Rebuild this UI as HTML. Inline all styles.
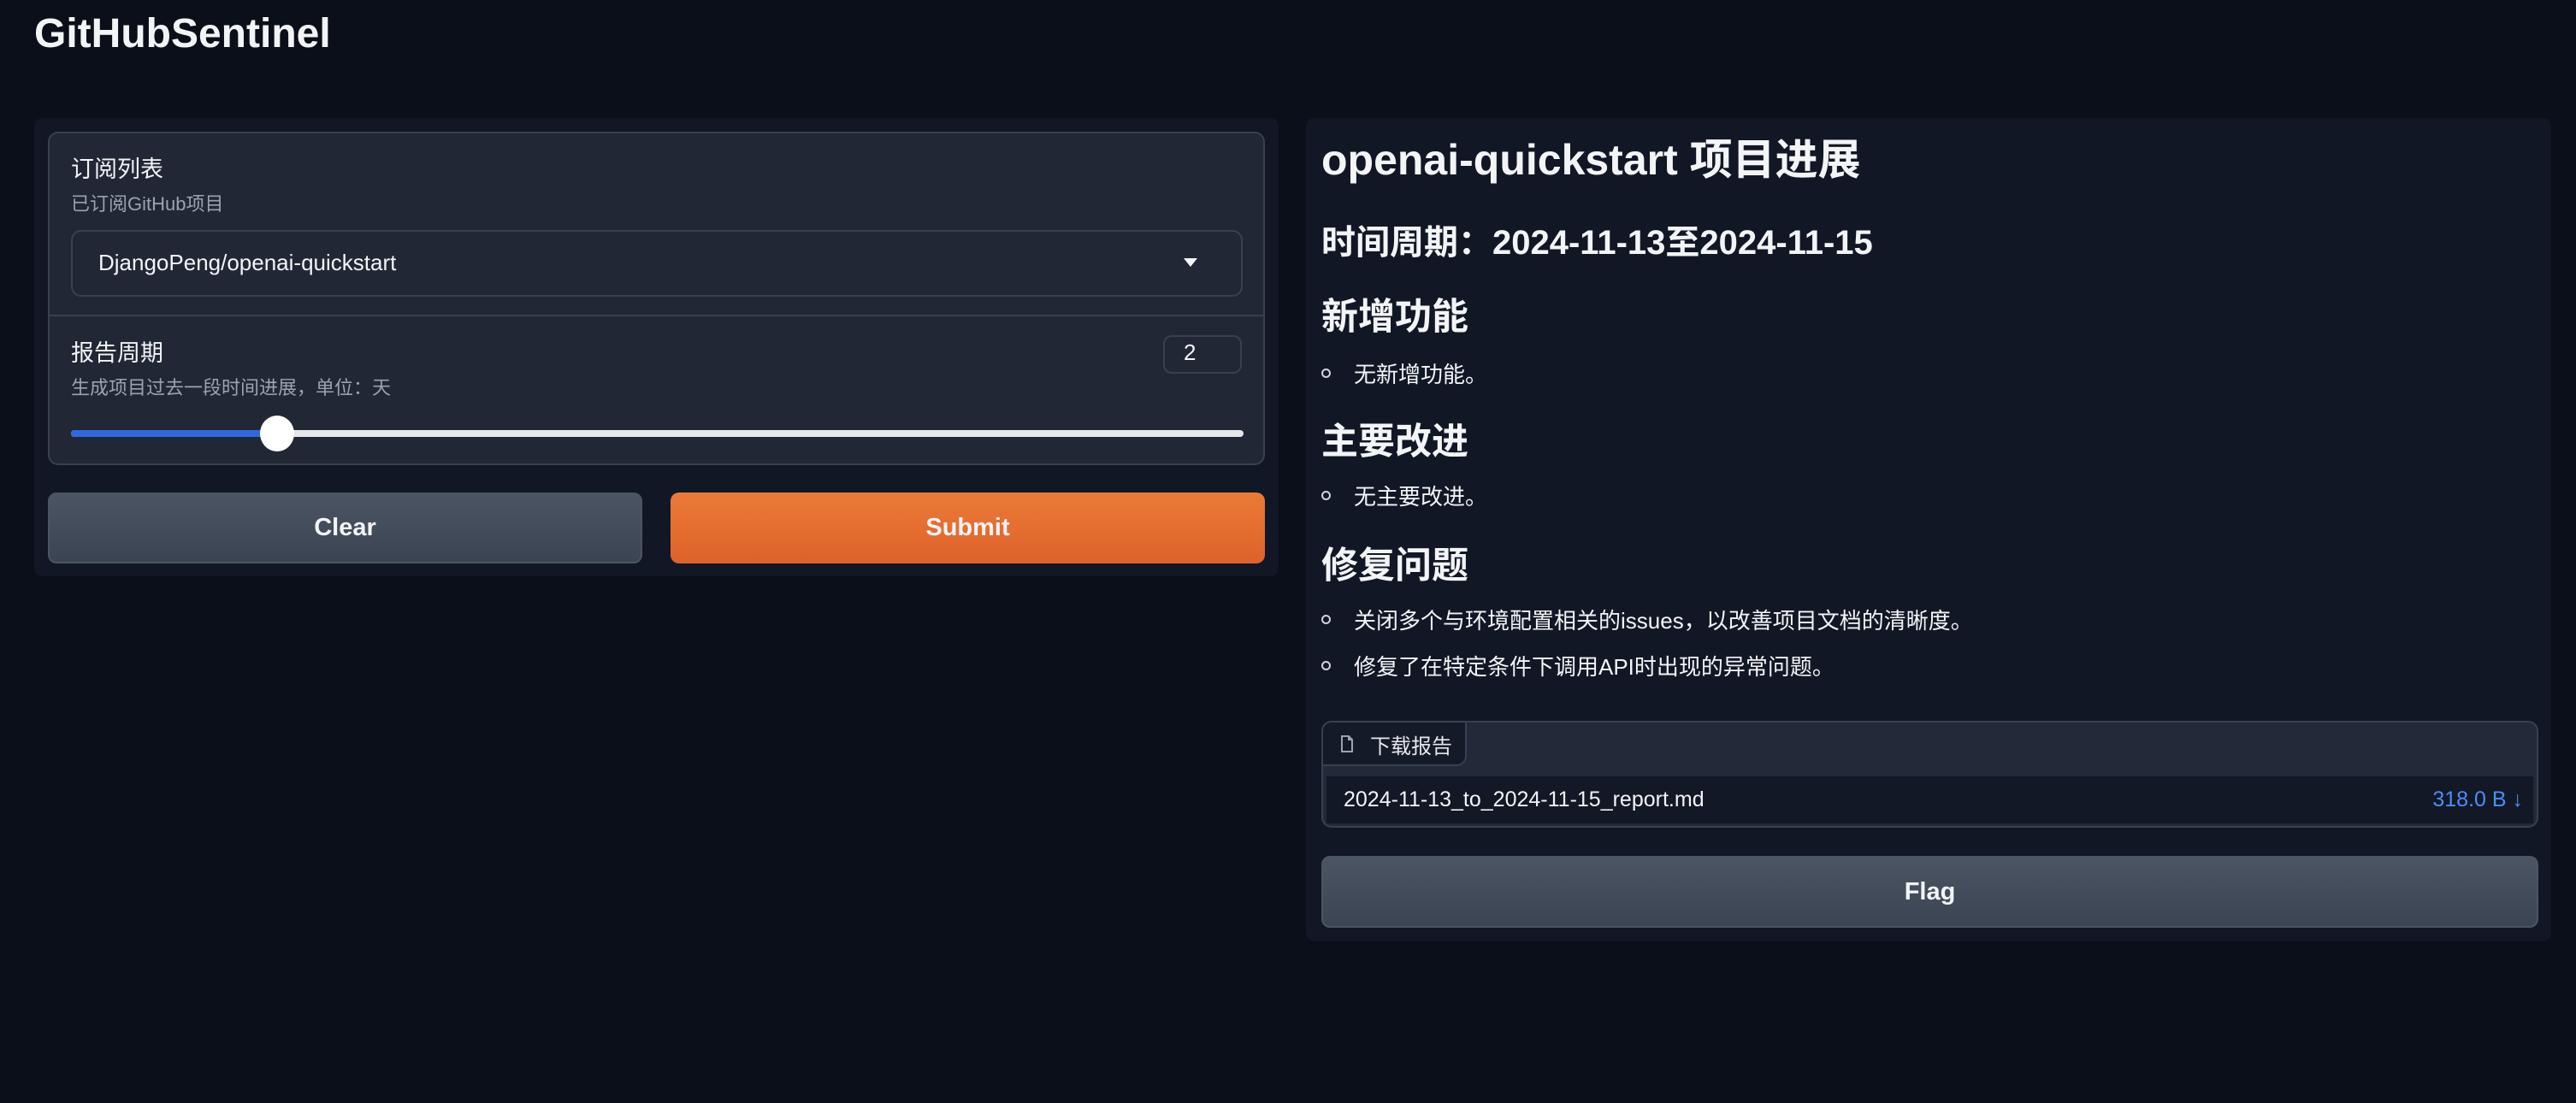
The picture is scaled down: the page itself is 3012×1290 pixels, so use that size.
<!DOCTYPE html>
<html><head><meta charset="utf-8"><style>
*{box-sizing:border-box;margin:0;padding:0}
body{width:3012px;height:1290px;background:#0b0f19;color:#f3f4f6;font-family:"Liberation Sans","Noto Sans CJK SC",sans-serif;position:relative;overflow:hidden}
.abs{position:absolute}
.t{white-space:nowrap}
.b{position:absolute;left:1545px;width:11px;height:11px;border:2px solid #d1d5db;border-radius:50%}
</style></head><body>
<div class="abs t" style="left:40px;top:12px;font-size:48px;font-weight:bold">GitHubSentinel</div>

<div class="abs" style="left:40px;top:138px;width:1455px;height:536px;background:#111725;border-radius:10px"></div>
<div class="abs" style="left:56px;top:154px;width:1423px;height:390px;background:#212735;border:2px solid #374151;border-radius:12px"></div>
<div class="abs t" style="left:83px;top:176px;font-size:27px">订阅列表</div>
<div class="abs t" style="left:83px;top:221px;font-size:22px;color:#9ca3af">已订阅GitHub项目</div>
<div class="abs" style="left:83px;top:269px;width:1370px;height:78px;border:2px solid #374151;border-radius:12px;background:#212735"></div>
<div class="abs t" style="left:115px;top:292px;font-size:26px">DjangoPeng/openai-quickstart</div>
<div class="abs" style="left:1384px;top:302px;width:0;height:0;border-left:8px solid transparent;border-right:8px solid transparent;border-top:10px solid #f3f4f6"></div>
<div class="abs" style="left:58px;top:368px;width:1419px;height:2px;background:#374151"></div>
<div class="abs t" style="left:83px;top:391px;font-size:27px">报告周期</div>
<div class="abs t" style="left:83px;top:436px;font-size:22px;color:#9ca3af">生成项目过去一段时间进展，单位：天</div>
<div class="abs" style="left:1360px;top:392px;width:92px;height:45px;border:2px solid #374151;border-radius:10px"></div>
<div class="abs t" style="left:1384px;top:397px;font-size:26px">2</div>
<div class="abs" style="left:83px;top:503px;width:1371px;height:8px;background:#e5e7eb;border-radius:4px"></div>
<div class="abs" style="left:83px;top:503px;width:240px;height:8px;background:#3168e0;border-radius:4px"></div>
<div class="abs" style="left:304px;top:486px;width:40px;height:42px;background:#fff;border-radius:50%"></div>
<div class="abs" style="left:56px;top:576px;width:695px;height:83px;background:linear-gradient(#4b5563,#3b4452);border:2px solid #4b5563;border-radius:10px;font-size:29px;font-weight:bold;text-align:center;line-height:79px">Clear</div>
<div class="abs" style="left:784px;top:576px;width:695px;height:83px;background:linear-gradient(#ea7a38,#de6229);border-radius:10px;font-size:29px;font-weight:bold;text-align:center;line-height:83px">Submit</div>

<div class="abs" style="left:1527px;top:138px;width:1456px;height:963px;background:#111725;border-radius:10px"></div>
<div class="abs t" style="left:1545px;top:147px;font-size:50px;font-weight:bold">openai-quickstart 项目进展</div>
<div class="abs t" style="left:1545px;top:251px;font-size:40px;font-weight:bold">时间周期：2024-11-13至2024-11-15</div>
<div class="abs t" style="left:1545px;top:336px;font-size:43px;font-weight:bold">新增功能</div>
<div class="b" style="top:431px"></div>
<div class="abs t" style="left:1583px;top:418px;font-size:26px">无新增功能。</div>
<div class="abs t" style="left:1545px;top:482px;font-size:43px;font-weight:bold">主要改进</div>
<div class="b" style="top:574px"></div>
<div class="abs t" style="left:1583px;top:561px;font-size:26px">无主要改进。</div>
<div class="abs t" style="left:1545px;top:627px;font-size:43px;font-weight:bold">修复问题</div>
<div class="b" style="top:719px"></div>
<div class="abs t" style="left:1583px;top:706px;font-size:26px">关闭多个与环境配置相关的issues，以改善项目文档的清晰度。</div>
<div class="b" style="top:773px"></div>
<div class="abs t" style="left:1583px;top:760px;font-size:26px">修复了在特定条件下调用API时出现的异常问题。</div>

<div class="abs" style="left:1545px;top:843px;width:1423px;height:125px;background:#232938;border:2px solid #374151;border-radius:12px;overflow:hidden">
 <div class="abs" style="left:-2px;top:-2px;width:170px;height:53px;background:#141a28;border:2px solid #374151;border-radius:0 0 12px 0"></div>
 <svg class="abs" style="left:20px;top:14px" width="16" height="22" viewBox="0 0 16 22"><path d="M2 2h8l4 4v14H2z M10 2v4h4" fill="none" stroke="#9ca3af" stroke-width="2"/></svg>
 <div class="abs t" style="left:55px;top:8px;font-size:24px;color:#e5e7eb">下载报告</div>
 <div class="abs" style="left:4px;top:63px;width:1411px;height:55px;background:#131826"></div>
 <div class="abs t" style="left:24px;top:76px;font-size:25px">2024-11-13_to_2024-11-15_report.md</div>
 <div class="abs t" style="right:16px;top:76px;font-size:25px;color:#4b8ef5">318.0 B ↓</div>
</div>
<div class="abs" style="left:1545px;top:1001px;width:1423px;height:84px;background:linear-gradient(#4b5563,#3b4452);border:2px solid #4b5563;border-radius:10px;font-size:29px;font-weight:bold;text-align:center;line-height:80px">Flag</div>
</body></html>
